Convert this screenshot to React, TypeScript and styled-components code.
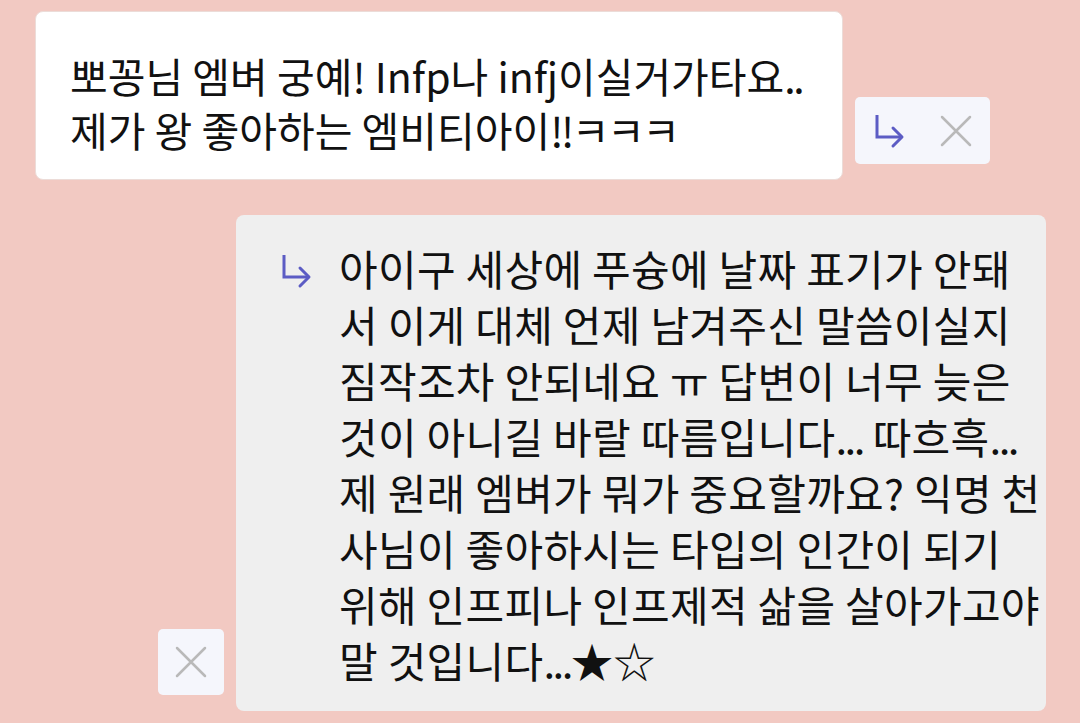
import { createGlobalStyle, styled } from "styled-components";

const GlobalStyle = createGlobalStyle`
    html, body {
        margin: 0;
        padding: 0;
        background: #f2c9c2;
    }
    body {
        font-family: "Noto Sans CJK KR", "Noto Sans", sans-serif;
        color: #111;
    }
`

const Page = styled.main`
    display: flex;
    flex-direction: column;
    gap: 35px;
    padding: 11px 0 0 35px;
    width: 1080px;
    box-sizing: border-box;
`

const Row = styled.section<{ $indent?: number }>`
    display: flex;
    align-items: flex-end;
    gap: 12px;
    padding-left: ${({ $indent }) => $indent ?? 0}px;
`

const Bubble = styled.div<{ $variant: 'received' | 'reply' }>`
    box-sizing: border-box;
    display: flex;
    align-items: flex-start;
    border-radius: 8px;
    ${({ $variant }) => $variant === 'received'
        ? `
            width: 808px;
            background: #ffffff;
            border: 1px solid #ecdcd8;
            padding: 36px 20px 23px 34px;
        `
        : `
            width: 810px;
            background: #efefef;
            padding: 25px 10px 23px 45px;
            gap: 26px;
        `}
`

const MessageText = styled.p`
    margin: 0;
    font-size: 41px;
    line-height: 54px;
    white-space: nowrap;
`

const ReplyText = styled(MessageText)`
    font-size: 42px;
    line-height: 56px;
    letter-spacing: 0.3px;
`

// punctuation runs sit tighter in the original font
const Tight = styled.span`
    letter-spacing: -2.5px;
`

const ActionBox = styled.div<{ $wide?: boolean }>`
    display: flex;
    align-items: center;
    justify-content: center;
    gap: 34px;
    width: ${({ $wide }) => ($wide ? '135px' : '66px')};
    height: ${({ $wide }) => ($wide ? '67px' : '66px')};
    margin-bottom: 16px;
    background: #f5f6fc;
    border-radius: 5px;
    flex-shrink: 0;
`

const ReplyIconWrap = styled.span`
    display: flex;
    padding-top: 13px;
    flex-shrink: 0;
`

function ReplyArrow() {
    return (
        <svg width="32" height="36" viewBox="0 0 32 36" fill="none">
            <path d="M3 2 V24 H28" stroke="#5c5cc4" strokeWidth="3" strokeLinejoin="miter" />
            <path d="M19 15 L28 24 L19 33" stroke="#5c5cc4" strokeWidth="3" strokeLinecap="round" strokeLinejoin="round" />
        </svg>
    )
}

function CloseIcon() {
    return (
        <svg width="32" height="32" viewBox="0 0 32 32" fill="none">
            <path d="M2 2 L30 30 M30 2 L2 30" stroke="#b9b9b9" strokeWidth="2.5" strokeLinecap="round" />
        </svg>
    )
}

function App() {
    return (
        <>
            <GlobalStyle />
            <Page>
                <Row>
                    <Bubble $variant="received">
                        <MessageText>
                            뽀꽁님 엠벼 궁예! Infp나 infj이실거가타요<Tight>..</Tight>
                            <br />
                            제가 왕 좋아하는 엠비티아이<Tight>!!ㅋㅋㅋ</Tight>
                        </MessageText>
                    </Bubble>
                    <ActionBox $wide>
                        <ReplyArrow />
                        <CloseIcon />
                    </ActionBox>
                </Row>
                <Row $indent={123}>
                    <ActionBox>
                        <CloseIcon />
                    </ActionBox>
                    <Bubble $variant="reply">
                        <ReplyIconWrap>
                            <ReplyArrow />
                        </ReplyIconWrap>
                        <ReplyText>
                            아이구 세상에 푸슝에 날짜 표기가 안돼
                            <br />
                            서 이게 대체 언제 남겨주신 말씀이실지
                            <br />
                            짐작조차 안되네요 ㅠ 답변이 너무 늦은
                            <br />
                            것이 아니길 바랄 따름입니다<Tight>...</Tight> 따흐흑<Tight>...</Tight>
                            <br />
                            제 원래 엠벼가 뭐가 중요할까요? 익명 천
                            <br />
                            사님이 좋아하시는 타입의 인간이 되기
                            <br />
                            위해 인프피나 인프제적 삶을 살아가고야
                            <br />
                            말 것입니다<Tight>...</Tight>★☆
                        </ReplyText>
                    </Bubble>
                </Row>
            </Page>
        </>
    )
}

export default App
